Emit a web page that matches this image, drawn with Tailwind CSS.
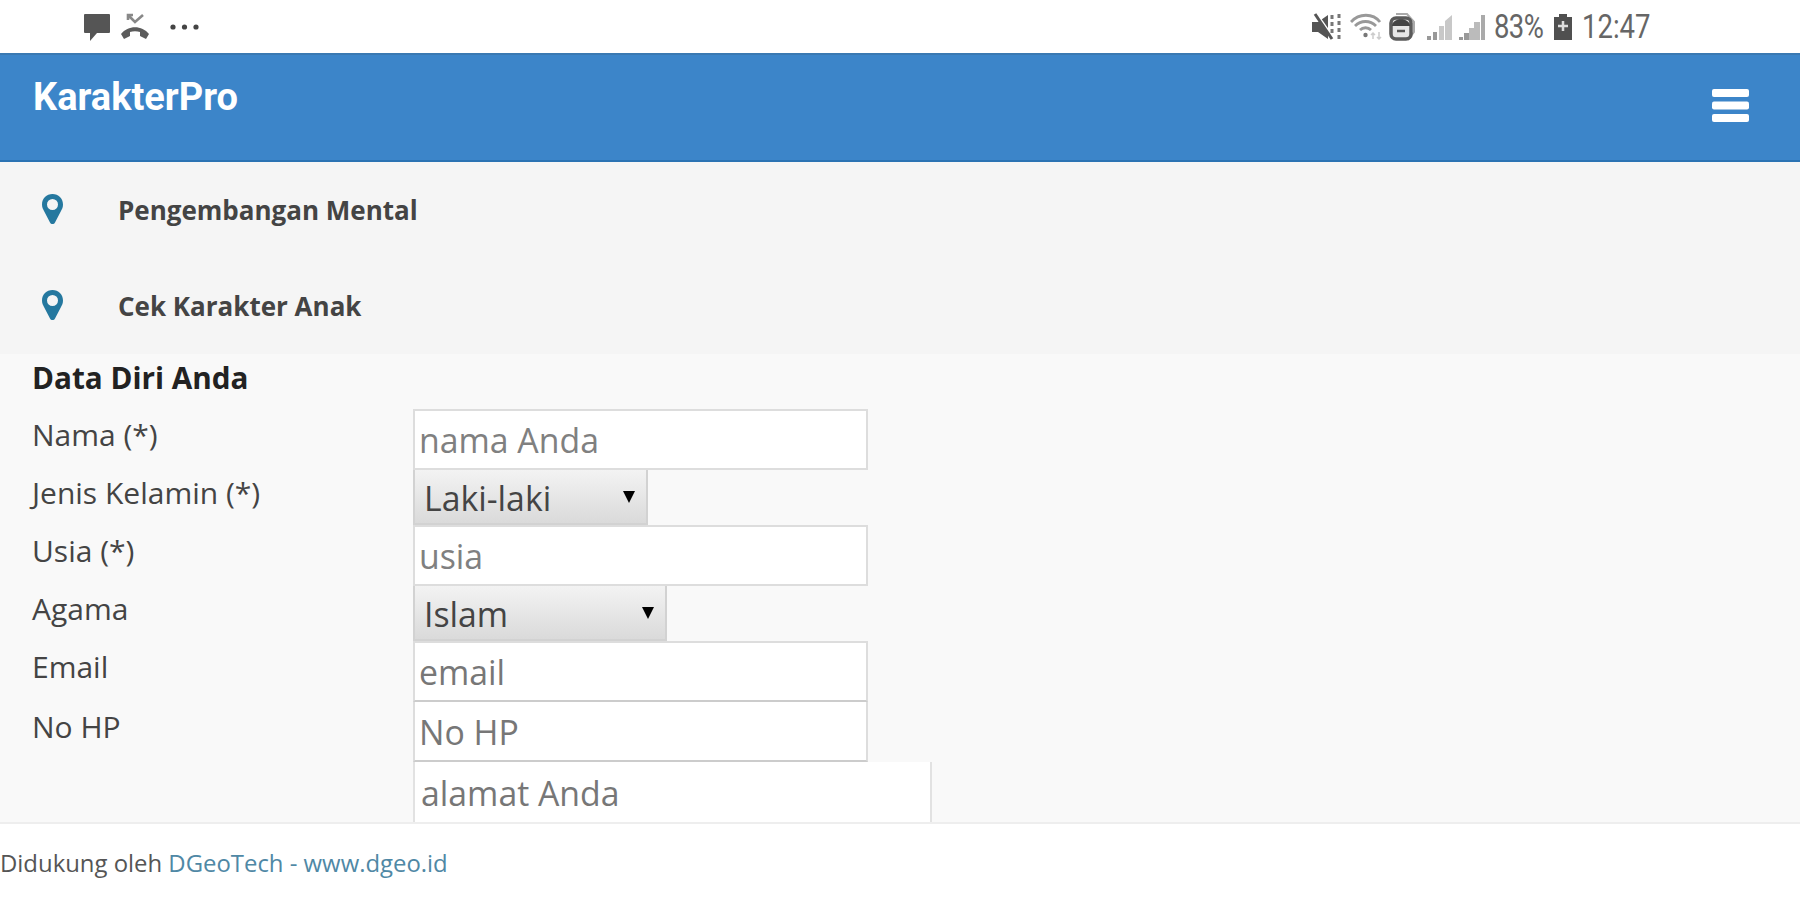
<!DOCTYPE html>
<html lang="id">
<head>
    <meta charset="UTF-8">
    <meta name="viewport" content="width=device-width, initial-scale=1.0">
    <title>KarakterPro</title>
    <script src="https://cdn.jsdelivr.net/npm/@tailwindcss/browser@4"></script>
</head>
<body class="h-[900px] overflow-hidden bg-white font-['Open_Sans',sans-serif] text-[#444] flex flex-col">
    <!-- Status bar -->
    <div class="h-[53px] shrink-0 flex items-center justify-between pl-[83px] pr-[150px] font-[Roboto,sans-serif] text-[#666]">
        <div class="flex items-center">
            <svg class="w-7 h-7" viewBox="0 0 28 28" fill="#555"><path d="M2 1h24a1 1 0 0 1 1 1v17a1 1 0 0 1-1 1H14l-7 8v-8H2a1 1 0 0 1-1-1V2a1 1 0 0 1 1-1z"/></svg>
            <svg class="w-7 h-7 ml-[10px]" viewBox="0 0 28 28"><path d="M7 7V2h5M7 2l7 7 8-7" fill="none" stroke="#888" stroke-width="2.6"/><path d="M0 21c7-9 21-9 28 0l-3 5-6-3v-4c-3-1-7-1-10 0v4l-6 3z" fill="#5c5c5c"/></svg>
            <svg class="w-[30px] h-2 ml-[20px]" viewBox="0 0 30 8" fill="#444"><circle cx="4" cy="4" r="2.6"/><circle cx="15.500" cy="4" r="2.6"/><circle cx="27" cy="4" r="2.6"/></svg>
        </div>
        <div class="flex items-center">
            <svg class="w-[29px] h-7" viewBox="0 0 29 28"><path d="M0 9h6l10-7v24l-10-7H0z" fill="#555"/><path d="M5 1l16 23" stroke="#fff" stroke-width="2"/><path d="M3 1l17 25" stroke="#555" stroke-width="3"/><path d="M20 2v20M27 1v26" stroke="#777" stroke-width="3" stroke-dasharray="4 3"/></svg>
            <svg class="w-8 h-7 ml-[9px]" viewBox="0 0 32 28" fill="none" stroke="#999" stroke-width="2.8"><path d="M1 9c8-9 22-9 29 0M5 13c6-6 15-6 21 0M10 17c3-3 8-3 11 0"/><circle cx="15.500" cy="22" r="2.2" fill="#777" stroke="none"/><path d="M23 26v-6m-2 2 2-2 2 2M29 19v7m-2-2 2 2 2-2" stroke="#ccc" stroke-width="1.5"/></svg>
            <svg class="w-[26px] h-7 ml-[7px]" viewBox="0 0 26 28"><path d="M7 1h11l7 8v10l-6 8" fill="none" stroke="#aaa" stroke-width="2"/><rect x="2" y="5" width="20" height="21" rx="5" fill="#e5e5e5" stroke="#5a5a5a" stroke-width="3.500"/><path d="M3 13c0-9 18-9 18 0z" fill="#444"/><path d="M8 18h8" stroke="#555" stroke-width="2.5"/></svg>
            <svg class="w-[27px] h-7 ml-[11px]" viewBox="0 0 27 28" fill="#c8c8c8"><path d="M1 23h4v4H1zM7 19h4v8H7z" fill="#999"/><path d="M13 13h5v14h-5zM19 8l7-6v25h-7z"/></svg>
            <svg class="w-[27px] h-7 ml-[6px]" viewBox="0 0 27 28" fill="#bbb"><path d="M0 24h4v3H0zM5 20h5v7H5z" fill="#999"/><path d="M10 15h5v12h-5zM15 9h6v18h-6z"/><path d="M22 2h4v25h-4z" fill="#aaa"/></svg>
            <span class="ml-[8px] w-[51px] text-[27.500px] leading-none tracking-[-0.6px] scale-y-120">83%</span>
            <svg class="w-[20px] h-7 ml-[8px]" viewBox="0 0 20 28"><path d="M6 1h8v3h5v23H1V4h5z" fill="#505050"/><path d="M10 8v10M5 13h10" stroke="#ddd" stroke-width="2.500"/></svg>
            <span class="ml-[9px] w-[68px] text-[27.500px] leading-none scale-y-120">12:47</span>
        </div>
    </div>

    <!-- Header -->
    <header class="h-[109px] shrink-0 bg-[#3c85c9] border-y-2 border-t-[#3a79b2] border-b-[#2b73b3] flex justify-between pl-[33px] pr-[51px]">
        <h1 class="pt-[20px] font-[Roboto,sans-serif] text-[38px] leading-[44px] font-bold text-white">KarakterPro</h1>
        <svg class="w-[37px] h-[33px] mt-[34px]" viewBox="0 0 37 33" fill="#fff"><rect width="37" height="8" rx="2"/><rect y="12.500" width="37" height="8" rx="2"/><rect y="25" width="37" height="8" rx="2"/></svg>
    </header>

    <!-- Menu -->
    <nav class="h-[192px] shrink-0 bg-[#f5f5f5] text-[26px] font-bold">
        <a class="h-24 flex items-center pl-[42px]">
            <svg class="w-[21px] h-[30px] mb-[3px]" viewBox="0 0 21 30" fill="#25789f"><path fill-rule="evenodd" d="M10.500 0C4.500 0 0 4.500 0 10.500c0 3 1 4.500 2 6.500l6 11.500c1 2 4 2 5 0L19 17c1-2 2-3.500 2-6.500C21 4.500 16.500 0 10.500 0zm0 5a5.500 5.500 0 1 1 0 11 5.500 5.500 0 0 1 0-11z"/></svg>
            <span class="ml-[55px]">Pengembangan Mental</span>
        </a>
        <a class="h-24 flex items-center pl-[42px]">
            <svg class="w-[21px] h-[30px] mb-[2px]" viewBox="0 0 21 30" fill="#25789f"><path fill-rule="evenodd" d="M10.500 0C4.500 0 0 4.500 0 10.500c0 3 1 4.500 2 6.500l6 11.500c1 2 4 2 5 0L19 17c1-2 2-3.500 2-6.500C21 4.500 16.500 0 10.500 0zm0 5a5.500 5.500 0 1 1 0 11 5.500 5.500 0 0 1 0-11z"/></svg>
            <span class="ml-[55px]">Cek Karakter Anak</span>
        </a>
    </nav>

    <!-- Form -->
    <main class="h-[468px] shrink-0 overflow-hidden bg-[#f9f9f9] pt-[6px] pl-[32px]">
        <h2 class="text-[29.700px] leading-9 font-bold text-[#222]">Data Diri Anda</h2>
        <form class="flex mt-[10px]">
            <div class="w-[381px] flex flex-col text-[30px]">
                <label class="leading-[58px]">Nama (*)</label>
                <label class="leading-[57px]">Jenis Kelamin (*)</label>
                <label class="leading-[59px]">Usia (*)</label>
                <label class="leading-[57px]">Agama</label>
                <label class="leading-[60px]">Email</label>
                <label class="leading-[60px]">No HP</label>
            </div>
            <div class="flex flex-col items-start pt-[3px] text-[33.800px]">
                <input type="text" placeholder="nama Anda" class="w-[455px] h-[61px] bg-white border-2 border-[#ddd] px-[4px] placeholder:text-[#808080]">
                <div class="relative">
                    <select class="block appearance-none w-[235px] h-[55px] bg-linear-to-b from-[#f3f3f3] to-[#dadada] border-2 border-t-0 border-[#d2d2d2] pl-[9px] pt-[3px] text-[#444]">
                        <option>Laki-laki</option>
                        <option>Perempuan</option>
                    </select>
                    <svg class="absolute right-[13px] top-[21px] w-3 h-3" viewBox="0 0 12 12"><path d="M0 0h12L6 12z"/></svg>
                </div>
                <input type="text" placeholder="usia" class="w-[455px] h-[61px] bg-white border-2 border-[#ddd] px-[4px] placeholder:text-[#808080]">
                <div class="relative">
                    <select class="block appearance-none w-[254px] h-[55px] bg-linear-to-b from-[#f3f3f3] to-[#dadada] border-2 border-t-0 border-[#d2d2d2] pl-[9px] pt-[3px] text-[#444]">
                        <option>Islam</option>
                    </select>
                    <svg class="absolute right-[13px] top-[21px] w-3 h-3" viewBox="0 0 12 12"><path d="M0 0h12L6 12z"/></svg>
                </div>
                <input type="text" placeholder="email" class="w-[455px] h-[61px] bg-white border-2 border-[#ddd] border-b-[#ccc] px-[4px] placeholder:text-[#777]">
                <input type="text" placeholder="No HP" class="w-[455px] h-[60px] bg-white border-2 border-t-0 border-[#ddd] border-b-[#ccc] px-[4px] pt-[2px] placeholder:text-[#777]">
                <textarea placeholder="alamat Anda" class="block resize-none w-[519px] h-[120px] bg-white border-2 border-t-0 border-[#e2e2e2] px-[6px] pt-[6px] leading-[50px] placeholder:text-[#777]"></textarea>
            </div>
        </form>
    </main>

    <footer class="h-[78px] shrink-0 border-t-2 border-[#eee] text-[23.900px] leading-[78px] text-[#555]">
        Didukung oleh <a class="text-[#4f88a5]">DGeoTech - www.dgeo.id</a>
    </footer>
</body>
</html>
